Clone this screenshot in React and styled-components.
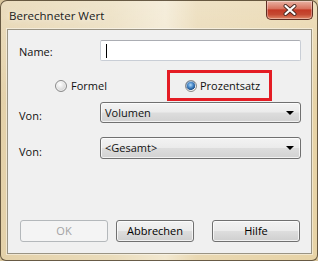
import React from "react";
import styled, { createGlobalStyle } from "styled-components";

const GlobalStyle = createGlobalStyle`
  html, body {
    margin: 0;
    padding: 0;
    width: 318px;
    height: 261px;
    overflow: hidden;
    background: #d8c59c;
  }
  * {
    box-sizing: border-box;
  }
`;

const Window = styled.div`
  width: 318px;
  height: 261px;
  display: flex;
  flex-direction: column;
  border: 1px solid rgba(70, 56, 36, 0.8);
  border-radius: 7px 7px 6px 6px;
  background:
    linear-gradient(180deg, rgba(255, 255, 255, 0.25) 0%, rgba(255, 255, 255, 0) 40%),
    linear-gradient(90deg, #e4d1a9 0%, #eadcbb 35%, #f2e8d0 52%, #e9d8b2 62%, #e7d3a6 100%);
  font-family: "Open Sans", "Liberation Sans", sans-serif;
  font-size: 11px;
  color: #111;
  overflow: hidden;
`;

const TitleBar = styled.div`
  height: 28px;
  display: flex;
  align-items: flex-start;
  flex-shrink: 0;
`;

const Title = styled.div`
  flex: 1;
  padding: 7px 0 0 8px;
  font-size: 11.5px;
  color: #1b1b1b;
  text-shadow: 0 0 6px rgba(255, 255, 255, 0.9);
`;

const CloseButton = styled.div`
  width: 47px;
  height: 19px;
  margin-right: 4px;
  display: flex;
  align-items: center;
  justify-content: center;
  border: 1px solid #5e2d22;
  border-top: none;
  border-radius: 0 0 5px 5px;
  background: linear-gradient(
    180deg,
    #e9b3a4 0%,
    #d8735f 42%,
    #c33a26 50%,
    #c54a33 75%,
    #e08868 100%
  );
  box-shadow: inset 0 0 0 1px rgba(255, 255, 255, 0.35);
`;

const Client = styled.div`
  flex: 1;
  margin: 0 5px 6px 6px;
  border: 1px solid #9a9484;
  box-shadow: 0 0 0 1px rgba(255, 255, 255, 0.45);
  background: #f0f0f0;
  display: flex;
  flex-direction: column;
`;

const FieldRow = styled.div`
  display: grid;
  grid-template-columns: 81px 201px;
  align-items: center;
  padding-left: 11px;
  margin-top: ${(p) => p.$top}px;
`;

const Label = styled.div`
  padding-top: ${(p) => p.$drop || 2}px;
`;

const TextBox = styled.div`
  height: 21px;
  display: flex;
  align-items: center;
  padding-left: 5px;
  background: #fff;
  border: 1px solid #c9ced6;
  border-top-color: #abadb3;
  border-radius: 2px;
`;

const Caret = styled.span`
  width: 1px;
  height: 14px;
  background: #000;
`;

const Select = styled.div`
  height: ${(p) => p.$h}px;
  display: flex;
  align-items: center;
  justify-content: space-between;
  padding: 0 6px 1px 4px;
  border: 1px solid #707070;
  border-radius: 3px;
  background: linear-gradient(180deg, #f3f3f3 0%, #ebebeb 48%, #dddddd 52%, #d2d2d2 100%);
  box-shadow: inset 0 0 0 1px rgba(255, 255, 255, 0.7);
`;

const Arrow = styled.span`
  width: 0;
  height: 0;
  border-left: 4px solid transparent;
  border-right: 4px solid transparent;
  border-top: 4px solid #000;
  margin-top: 1px;
`;

const RadioRow = styled.div`
  display: flex;
  align-items: center;
  margin-top: 9px;
  padding-left: 47px;
  height: 31px;
`;

const Option = styled.label`
  display: flex;
  align-items: center;
  gap: 4px;
  width: ${(p) => p.$w}px;
  height: 100%;
`;

const Highlight = styled.div`
  display: flex;
  align-items: center;
  gap: 3px;
  width: 105px;
  height: 31px;
  padding-left: 15px;
  border: 3px solid #e41c24;
`;

const RadioDot = styled.span`
  width: 12px;
  height: 12px;
  border-radius: 50%;
  flex-shrink: 0;
  border: 1px solid #8b8b8b;
  background: ${(p) =>
    p.$checked
      ? "radial-gradient(circle at 45% 40%, #b6dcf7 0%, #4f8fcf 30%, #1c4f8a 58%, #e6e6e6 64%, #fdfdfd 100%)"
      : "radial-gradient(circle at 40% 35%, #ffffff 0%, #e4e4e4 45%, #c6c6c6 100%)"};
  box-shadow: inset 0 0 0 1px rgba(255, 255, 255, 0.6);
`;

const ButtonRow = styled.div`
  display: flex;
  margin-top: auto;
  padding: 0 0 11px 12px;
`;

const Button = styled.div`
  width: ${(p) => p.$w}px;
  height: 22px;
  margin-right: ${(p) => p.$gap || 0}px;
  display: flex;
  align-items: center;
  justify-content: center;
  padding-bottom: 1px;
  border-radius: 3px;
  border: 1px solid ${(p) => (p.$disabled ? "#b4b8bb" : "#707070")};
  color: ${(p) => (p.$disabled ? "#a3a3a3" : "#000")};
  background: ${(p) =>
    p.$disabled
      ? "#f4f4f4"
      : "linear-gradient(180deg, #f2f2f2 0%, #ebebeb 48%, #dddddd 52%, #cfcfcf 100%)"};
  box-shadow: ${(p) =>
    p.$disabled ? "none" : "inset 0 0 0 1px rgba(255, 255, 255, 0.7)"};
`;

const App = () => {
  return (
    <>
      <GlobalStyle />
      <Window>
        <TitleBar>
          <Title>Berechneter Wert</Title>
          <CloseButton>
            <svg width="14" height="12" viewBox="0 0 14 12">
              <path
                d="M2.5 2 L11.5 10 M11.5 2 L2.5 10"
                stroke="#4a2a22"
                strokeWidth="4"
                strokeLinecap="round"
              />
              <path
                d="M2.5 2 L11.5 10 M11.5 2 L2.5 10"
                stroke="#ffffff"
                strokeWidth="2.2"
                strokeLinecap="round"
              />
            </svg>
          </CloseButton>
        </TitleBar>
        <Client>
          <FieldRow $top={10}>
            <Label>Name:</Label>
            <TextBox>
              <Caret />
            </TextBox>
          </FieldRow>
          <RadioRow>
            <Option $w={112}>
              <RadioDot />
              Formel
            </Option>
            <Highlight>
              <RadioDot $checked />
              Prozentsatz
            </Highlight>
          </RadioRow>
          <FieldRow $top={1}>
            <Label $drop={6}>Von:</Label>
            <Select $h={21}>
              Volumen
              <Arrow />
            </Select>
          </FieldRow>
          <FieldRow $top={14}>
            <Label $drop={6}>Von:</Label>
            <Select $h={22}>
              &lt;Gesamt&gt;
              <Arrow />
            </Select>
          </FieldRow>
          <ButtonRow>
            <Button $w={88} $gap={8} $disabled>
              OK
            </Button>
            <Button $w={78} $gap={18}>
              Abbrechen
            </Button>
            <Button $w={88}>Hilfe</Button>
          </ButtonRow>
        </Client>
      </Window>
    </>
  );
};

export default App;
